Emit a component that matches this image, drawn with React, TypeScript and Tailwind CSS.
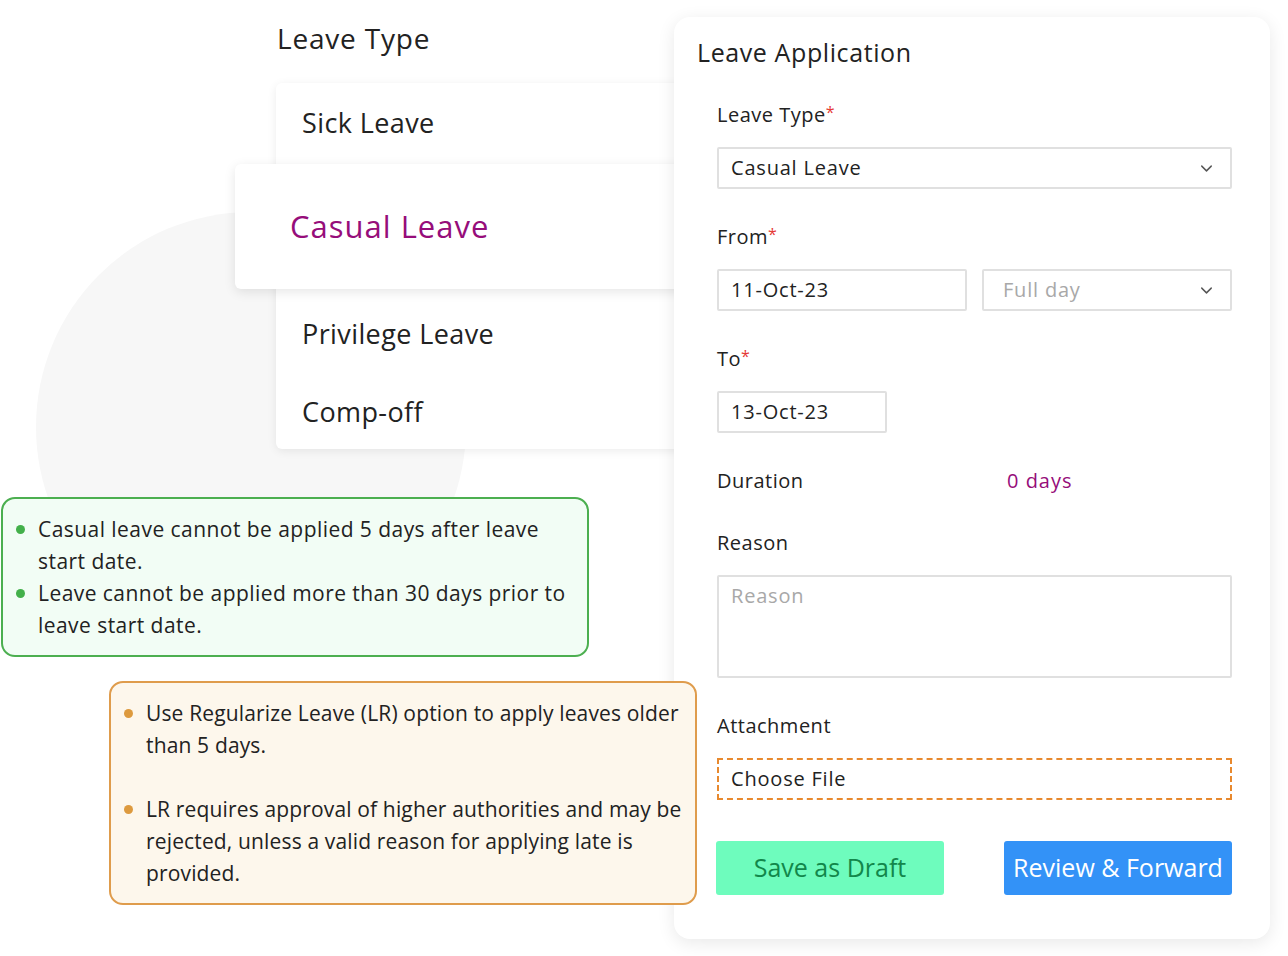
import { ChevronDown } from 'lucide-react'

const FONT = "font-['Open_Sans',sans-serif]"

function Label({ text, required }: { text: string; required?: boolean }) {
  return (
    <div className="h-[28px] leading-[28px] text-[20px] tracking-[0.5px] text-[#222]">
      {text}
      {required && <span className="text-[#e53935] align-top text-[16px] leading-[22px]">*</span>}
    </div>
  )
}

function Box({ children, className = '' }: { children?: React.ReactNode; className?: string }) {
  return (
    <div className={`h-[42px] border-2 border-[#e0e0e0] rounded-[2px] flex items-center text-[20px] tracking-[0.8px] ${className}`}>
      {children}
    </div>
  )
}

export default function App() {
  return (
    <div className={`relative w-[1288px] h-[956px] bg-white overflow-hidden ${FONT}`}>
      {/* backdrop circle */}
      <div className="absolute left-[36px] top-[212px] w-[430px] h-[430px] rounded-full bg-[#f7f7f7]" />

      {/* leave type picker */}
      <div className="absolute left-[277px] top-[19px] text-[28px] leading-[38px] tracking-[0.8px] text-[#222]">Leave Type</div>
      <div className="absolute left-[276px] top-[83px] w-[430px] bg-white rounded-[6px] shadow-[0_2px_10px_rgba(0,0,0,0.08)] pb-[4px] text-[27px] tracking-[0.4px] text-[#222]">
        <div className="h-[81px] flex items-center pl-[26px]">Sick Leave</div>
        <div className="h-[125px]" />
        <div className="h-[90px] flex items-center pl-[26px]">Privilege Leave</div>
        <div className="h-[66px] flex items-center pl-[26px]">Comp-off</div>
      </div>
      <div className="absolute left-[235px] top-[164px] w-[470px] h-[125px] bg-white rounded-[6px] shadow-[0_3px_12px_rgba(0,0,0,0.10)] flex items-center pl-[55px] text-[31px] tracking-[1px] text-[#960d7a]">
        Casual Leave
      </div>

      {/* green note */}
      <div className="absolute left-[1px] top-[497px] w-[588px] h-[160px] border-2 border-[#4caf50] bg-[#f2fdf5] rounded-[14px] pt-[14px] pl-[13px] text-[21px] leading-[32px] tracking-[0.45px] text-[#222]">
        <div className="flex">
          <span className="w-[9px] h-[9px] rounded-full bg-[#43b04a] mt-[12px] mr-[13px] shrink-0" />
          <span>Casual leave cannot be applied 5 days after leave<br />start date.</span>
        </div>
        <div className="flex">
          <span className="w-[9px] h-[9px] rounded-full bg-[#43b04a] mt-[12px] mr-[13px] shrink-0" />
          <span>Leave cannot be applied more than 30 days prior to<br />leave start date.</span>
        </div>
      </div>

      {/* application form */}
      <div className="absolute left-[674px] top-[17px] w-[596px] bg-white rounded-[16px] shadow-[0_4px_18px_rgba(0,0,0,0.09)] pt-[19px] pb-[44px]">
        <div className="pl-[23px] text-[25px] leading-[32px] tracking-[0.6px] font-medium text-[#222]">Leave Application</div>
        <div className="pl-[43px] pr-[38px] mt-[33px] flex flex-col gap-[34px]">
          <div className="flex flex-col gap-[18px]">
            <Label text="Leave Type" required />
            <Box className="pl-[12px] pr-[14px] justify-between text-[#222]">
              <span>Casual Leave</span>
              <ChevronDown size={19} strokeWidth={1.8} className="text-[#555]" />
            </Box>
          </div>
          <div className="flex flex-col gap-[18px]">
            <Label text="From" required />
            <div className="flex gap-[15px]">
              <Box className="w-[250px] pl-[12px] text-[#222]">11-Oct-23</Box>
              <Box className="flex-1 pl-[19px] pr-[14px] justify-between text-[#a8a8a8]">
                <span>Full day</span>
                <ChevronDown size={19} strokeWidth={1.8} className="text-[#555]" />
              </Box>
            </div>
          </div>
          <div className="flex flex-col gap-[18px]">
            <Label text="To" required />
            <Box className="w-[170px] pl-[12px] text-[#222]">13-Oct-23</Box>
          </div>
          <div className="flex h-[28px] leading-[28px] text-[20px] tracking-[0.5px]">
            <span className="w-[290px] text-[#222]">Duration</span>
            <span className="text-[#960d7a] tracking-[1px]">0 days</span>
          </div>
          <div className="flex flex-col gap-[18px]">
            <Label text="Reason" />
            <div className="h-[103px] border-2 border-[#e0e0e0] rounded-[2px] pl-[12px] pt-[5px] text-[20px] tracking-[0.8px] leading-[28px] text-[#a8a8a8]">
              Reason
            </div>
          </div>
          <div className="flex flex-col gap-[18px]">
            <Label text="Attachment" />
            <div className="h-[42px] border-2 border-dashed border-[#e8892e] flex items-center pl-[12px] text-[20px] tracking-[0.8px] text-[#222]">
              Choose File
            </div>
          </div>
          <div className="flex justify-between mt-[7px] -ml-[1px]">
            <button className="w-[228px] h-[54px] rounded-[3px] bg-[#6efcbd] text-[#12874b] text-[25px]">Save as Draft</button>
            <button className="w-[228px] h-[54px] rounded-[3px] bg-[#3392f7] text-white text-[25px]">Review &amp; Forward</button>
          </div>
        </div>
      </div>

      {/* orange note */}
      <div className="absolute left-[109px] top-[681px] w-[588px] h-[224px] border-2 border-[#df9c4c] bg-[#fdf7ec] rounded-[14px] pt-[14px] pl-[13px] text-[21px] leading-[32px] tracking-[0.15px] text-[#222] flex flex-col gap-[32px]">
        <div className="flex">
          <span className="w-[9px] h-[9px] rounded-full bg-[#dd9a3e] mt-[12px] mr-[13px] shrink-0" />
          <span>Use Regularize Leave (LR) option to apply leaves older<br />than 5 days.</span>
        </div>
        <div className="flex">
          <span className="w-[9px] h-[9px] rounded-full bg-[#dd9a3e] mt-[12px] mr-[13px] shrink-0" />
          <span>LR requires approval of higher authorities and may be<br />rejected, unless a valid reason for applying late is<br />provided.</span>
        </div>
      </div>
    </div>
  )
}
